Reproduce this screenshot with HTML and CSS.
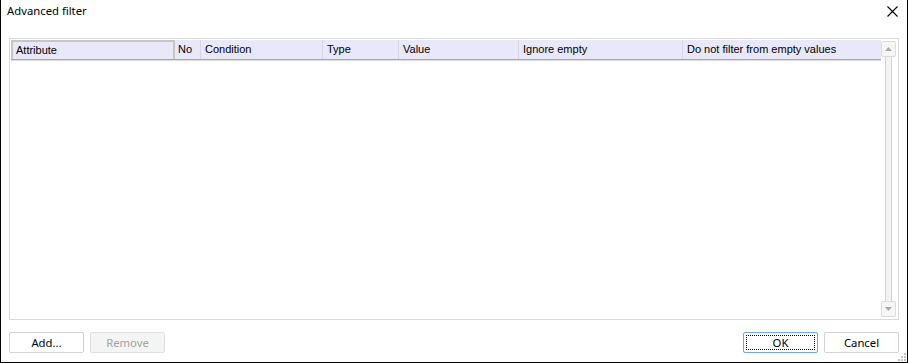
FILE: index.html
```html
<!DOCTYPE html>
<html>
<head>
    <title>Advanced filter</title>
    <link rel="stylesheet" href="styles.css">
</head>
<body>
    <div class="window">
        <div class="titlebar">
            <span class="title">Advanced filter</span>
            <svg class="close" width="11" height="11" viewBox="0 0 11 11">
                <path d="M0.5 0.5 L10.5 10.5 M10.5 0.5 L0.5 10.5" stroke="#000" stroke-width="1.1" fill="none"/>
            </svg>
        </div>

        <div class="grid">
            <div class="table">
                <div class="header">
                    <div class="col col-attr active">Attribute</div>
                    <div class="col col-no">No</div>
                    <div class="col col-cond">Condition</div>
                    <div class="col col-type">Type</div>
                    <div class="col col-value">Value</div>
                    <div class="col col-ignore">Ignore empty</div>
                    <div class="col col-nofilter">Do not filter from empty values</div>
                </div>
                <div class="rows"></div>
            </div>
            <div class="scrollbar">
                <div class="sb-btn">
                    <svg width="7" height="4" viewBox="0 0 7 4"><path d="M3.5 0 L7 4 L0 4 Z" fill="#a8a8a8"/></svg>
                </div>
                <div class="sb-track"></div>
                <div class="sb-btn">
                    <svg width="7" height="4" viewBox="0 0 7 4"><path d="M0 0 L7 0 L3.5 4 Z" fill="#a8a8a8"/></svg>
                </div>
            </div>
        </div>

        <div class="footer">
            <div class="btn-group">
                <button class="btn">Add...</button>
                <button class="btn" disabled>Remove</button>
            </div>
            <div class="btn-group">
                <button class="btn default"><span class="focus">OK</span></button>
                <button class="btn">Cancel</button>
            </div>
        </div>

        <svg class="grip" width="8" height="8" viewBox="0 0 8 8">
            <rect x="6" y="0" width="2" height="2" fill="#c4c4c4"/>
            <rect x="3" y="3" width="2" height="2" fill="#c4c4c4"/>
            <rect x="6" y="3" width="2" height="2" fill="#c4c4c4"/>
            <rect x="0" y="6" width="2" height="2" fill="#c4c4c4"/>
            <rect x="3" y="6" width="2" height="2" fill="#c4c4c4"/>
            <rect x="6" y="6" width="2" height="2" fill="#c4c4c4"/>
        </svg>
    </div>
</body>
</html>
```

FILE: styles.css
```css
body {
    margin: 0;
    background: #fff;
}
.window {
    position: relative;
    width: 908px;
    height: 363px;
    box-sizing: border-box;
    border: 1px solid #000;
    border-top: none;
    background: #fff;
    font-family: "Noto Sans", "Liberation Sans", sans-serif;
    font-size: 11.3px;
    color: #000;
    display: flex;
    flex-direction: column;
}
.titlebar {
    height: 22px;
    display: flex;
    align-items: center;
    justify-content: space-between;
    padding: 0 9px 0 6px;
}
.title {
    line-height: 22px;
}
.close {
    display: block;
}

/* grid panel */
.grid {
    margin: 16px 8px 0 8px;
    height: 282px;
    box-sizing: border-box;
    border: 1px solid #dadada;
    padding: 1px 2px 1px 1px;
    display: flex;
}
.table {
    width: 870px;
    display: flex;
    flex-direction: column;
}
.header {
    display: flex;
    height: 20px;
    box-sizing: border-box;
    background: #e8e8f9;
    border-bottom: 1px solid #a9a9a9;
    box-shadow: 0 1px 0 #dcdcdc;
    font-family: "Liberation Sans", Arial, sans-serif;
    font-size: 11px;
}
.col {
    box-sizing: border-box;
    padding-left: 3px;
    line-height: 18px;
    border-right: 1px solid #d6d6e6;
    white-space: nowrap;
    overflow: hidden;
}
.col.active {
    border: 2px solid #c6c6c6;
    border-bottom: none;
    padding-left: 3px;
    line-height: 16px;
}
.col-attr { width: 164px; }
.col-no { width: 26px; }
.col-cond { width: 122px; padding-left: 4px; }
.col-type { width: 76px; padding-left: 4px; }
.col-value { width: 120px; padding-left: 4px; }
.col-ignore { width: 164px; padding-left: 4px; }
.col-nofilter { width: 198px; padding-left: 4px; border-right: none; }
.rows {
    flex: 1;
}

/* scrollbar */
.scrollbar {
    width: 15px;
    padding: 1px 0;
    display: flex;
    flex-direction: column;
    align-items: center;
}
.sb-btn {
    width: 15px;
    height: 16px;
    box-sizing: border-box;
    border: 1px solid #dcdcdc;
    border-radius: 2px;
    background: #f6f6f6;
    display: flex;
    align-items: center;
    justify-content: center;
}
.sb-track {
    flex: 1;
    width: 7px;
    box-sizing: border-box;
    border: 1px solid #d4d4d4;
    border-top: none;
    border-bottom: none;
    background: #f3f3f3;
}

/* buttons */
.footer {
    display: flex;
    justify-content: space-between;
    padding: 0 8px;
    margin-top: 12px;
}
.btn-group {
    display: flex;
    gap: 6px;
}
.btn {
    width: 75px;
    height: 21px;
    padding: 0;
    box-sizing: border-box;
    border: 1px solid #d2d2d2;
    border-radius: 2px;
    background: #fff;
    font-family: "Noto Sans", "Liberation Sans", sans-serif;
    font-size: 11.3px;
    color: #000;
}
.btn:disabled {
    background: #f4f4f4;
    border-color: #dfdfdf;
    color: #a3a3a3;
}
.btn.default {
    border-color: #6aa7e4;
    padding: 2px;
}
.focus {
    display: flex;
    align-items: center;
    justify-content: center;
    height: 100%;
    border: 1px dotted #000;
    box-sizing: border-box;
}
.grip {
    position: absolute;
    right: 1px;
    bottom: 1px;
}
```
